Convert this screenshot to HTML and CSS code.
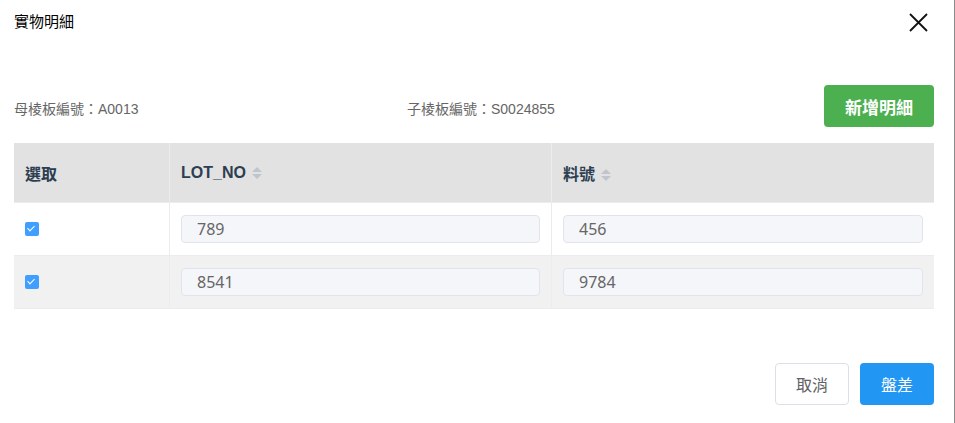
FILE: index.html
```html
<!DOCTYPE html>
<html lang="zh-Hant">
<head>
    <meta charset="UTF-8">
    <meta name="viewport" content="width=device-width, initial-scale=1.0">
    <title>實物明細</title>
    <link rel="stylesheet" href="styles.css">
</head>
<body>
    <div class="dialog">
        <!-- 標題列 -->
        <div class="dialog-header">
            <span class="dialog-title">實物明細</span>
            <button type="button" class="close-btn" aria-label="關閉">
                <svg width="19" height="19" viewBox="0 0 19 19">
                    <path d="M1 1 L18 18 M18 1 L1 18" stroke="#111" stroke-width="1.8" fill="none"/>
                </svg>
            </button>
        </div>

        <!-- 編號資訊 -->
        <div class="info-row">
            <span class="info-item info-parent">母棱板編號：A0013</span>
            <span class="info-item">子棱板編號：S0024855</span>
            <button type="button" class="btn btn-green">新增明細</button>
        </div>

        <!-- 明細表格 -->
        <table class="detail-table">
            <thead>
                <tr>
                    <th class="col-select">選取</th>
                    <th class="col-lot">LOT_NO <span class="sort-icon"></span></th>
                    <th class="col-part">料號 <span class="sort-icon"></span></th>
                </tr>
            </thead>
            <tbody>
                <tr>
                    <td><span class="checkbox"></span></td>
                    <td><input type="text" class="cell-input" value="789"></td>
                    <td><input type="text" class="cell-input" value="456"></td>
                </tr>
                <tr class="row-alt">
                    <td><span class="checkbox"></span></td>
                    <td><input type="text" class="cell-input" value="8541"></td>
                    <td><input type="text" class="cell-input" value="9784"></td>
                </tr>
            </tbody>
        </table>

        <!-- 底部按鈕 -->
        <div class="dialog-footer">
            <button type="button" class="btn btn-plain">取消</button>
            <button type="button" class="btn btn-blue">盤差</button>
        </div>
    </div>
</body>
</html>
```

FILE: styles.css
```css
html, body {
    margin: 0;
    padding: 0;
    height: 100%;
}
body {
    font-family: "Liberation Sans", "Noto Sans CJK TC", sans-serif;
    background-color: #fff;
    width: 954px;
    border-right: 1px solid #8a8a8a;
    box-sizing: content-box;
}
.dialog {
    padding: 0 20px 0 14px;
}
.dialog-header {
    display: flex;
    justify-content: space-between;
    align-items: center;
    height: 44px;
}
.dialog-title {
    font-family: "Noto Sans CJK TC", sans-serif;
    font-size: 15px;
    color: #000;
    margin-top: -4px;
}
.close-btn {
    background: none;
    border: none;
    padding: 0;
    margin-right: 6px;
    width: 19px;
    height: 19px;
    cursor: pointer;
}
.close-btn svg {
    display: block;
}
.info-row {
    display: flex;
    align-items: center;
    margin-top: 41px;
    height: 42px;
}
.info-item {
    font-family: "Liberation Sans", "Noto Sans CJK TC", sans-serif;
    font-size: 14px;
    color: #666;
    margin-top: 3px;
}
.info-parent {
    width: 393px;
}
.btn {
    font-family: "Noto Sans CJK TC", sans-serif;
    font-size: 16px;
    border-radius: 4px;
    cursor: pointer;
}
.btn-green {
    margin-left: auto;
    width: 110px;
    height: 42px;
    background-color: #4caf50;
    color: #fff;
    font-size: 17px;
    font-weight: bold;
    border: none;
}
.detail-table {
    width: 920px;
    border-collapse: collapse;
    margin-top: 16px;
    table-layout: fixed;
}
.detail-table th {
    height: 59px;
    background-color: #e2e2e2;
    text-align: left;
    padding: 0 11px;
    font-family: "Liberation Sans", "Noto Sans CJK TC", sans-serif;
    font-size: 16px;
    font-weight: bold;
    color: #2c3e50;
    border-left: 1px solid #ececec;
    border-bottom: 1px solid #ececec;
}
.detail-table td {
    height: 52px;
    padding: 0 11px;
    border-left: 1px solid #ececec;
    border-bottom: 1px solid #ececec;
}
.detail-table th:first-child, .detail-table td:first-child {
    border-left: none;
}
.col-select {
    width: 133px;
}
.col-lot {
    width: 359px;
}
.row-alt td {
    background-color: #f1f1f1;
}
.sort-icon {
    display: inline-block;
    position: relative;
    width: 10px;
    height: 14px;
    vertical-align: -2px;
    margin-left: 2px;
}
.sort-icon::before, .sort-icon::after {
    content: "";
    position: absolute;
    left: 0;
    border-left: 5px solid transparent;
    border-right: 5px solid transparent;
}
.sort-icon::before {
    top: 1px;
    border-bottom: 5px solid #c0c4cc;
}
.sort-icon::after {
    bottom: 1px;
    border-top: 5px solid #c0c4cc;
}
.checkbox {
    display: block;
    position: relative;
    width: 14px;
    height: 14px;
    border-radius: 2px;
    background-color: #409eff;
}
.checkbox::after {
    content: "";
    position: absolute;
    left: 4px;
    top: 2px;
    width: 3px;
    height: 6px;
    border-right: 1.5px solid #fff;
    border-bottom: 1.5px solid #fff;
    transform: rotate(45deg);
}
.cell-input {
    display: block;
    width: 100%;
    height: 28px;
    box-sizing: border-box;
    padding: 0 15px;
    border: 1px solid #e1e4ec;
    border-radius: 4px;
    background-color: #f5f6fa;
    font-family: "Noto Sans", sans-serif;
    font-size: 16px;
    color: #666;
}
.dialog-footer {
    display: flex;
    justify-content: flex-end;
    gap: 11px;
    margin-top: 54px;
}
.btn-plain {
    width: 74px;
    height: 42px;
    background-color: #fff;
    border: 1px solid #dcdfe6;
    color: #606266;
}
.btn-blue {
    width: 74px;
    height: 42px;
    background-color: #2196f3;
    border: none;
    color: #fff;
}
```
